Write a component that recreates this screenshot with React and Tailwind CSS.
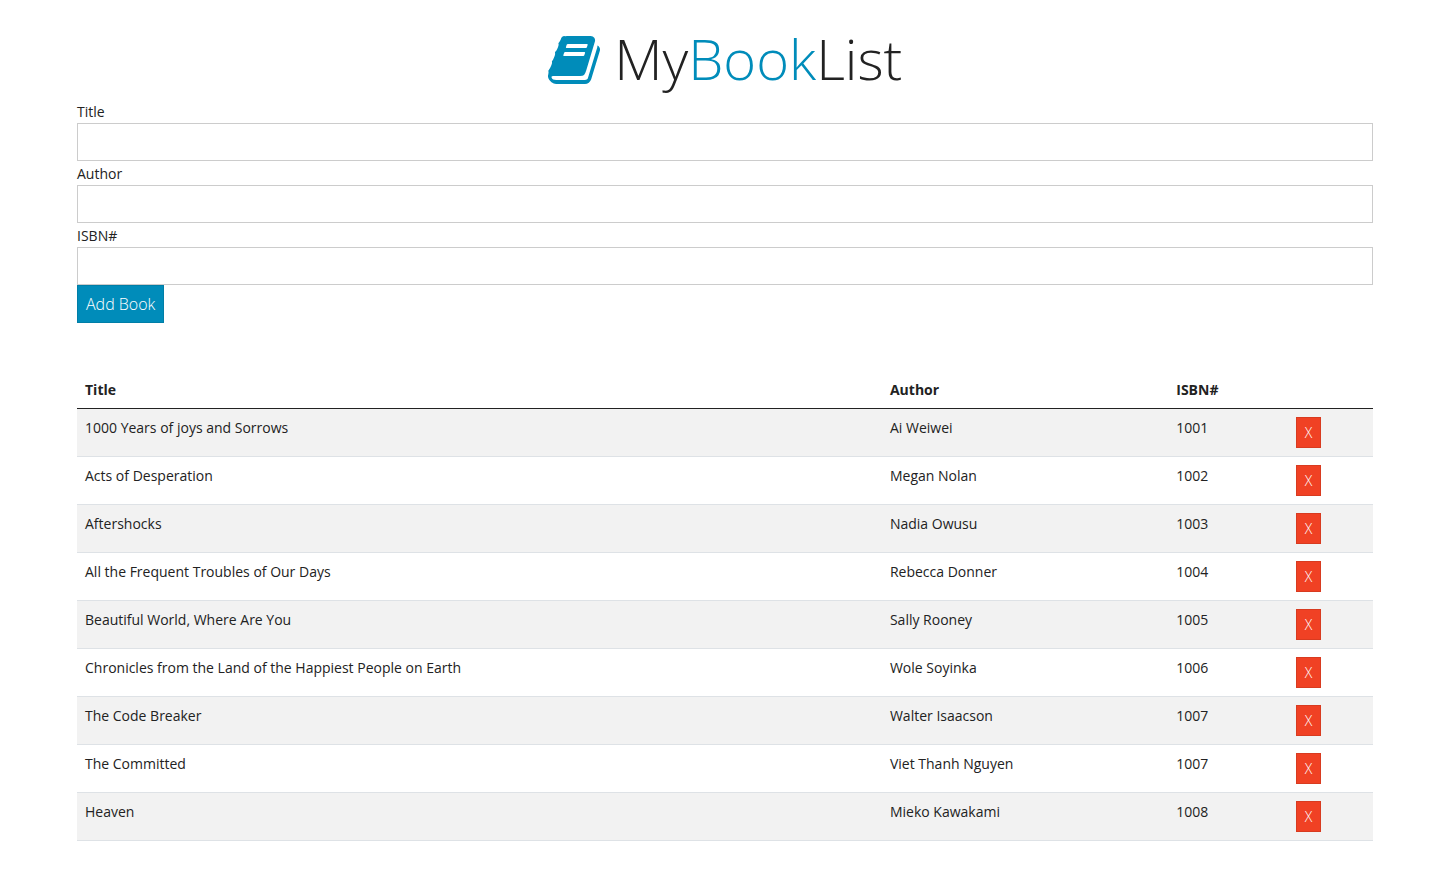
import { useState } from "react";

const initialBooks = [
  { title: "1000 Years of joys and Sorrows", author: "Ai Weiwei", isbn: "1001" },
  { title: "Acts of Desperation", author: "Megan Nolan", isbn: "1002" },
  { title: "Aftershocks", author: "Nadia Owusu", isbn: "1003" },
  { title: "All the Frequent Troubles of Our Days", author: "Rebecca Donner", isbn: "1004" },
  { title: "Beautiful World, Where Are You", author: "Sally Rooney", isbn: "1005" },
  { title: "Chronicles from the Land of the Happiest People on Earth", author: "Wole Soyinka", isbn: "1006" },
  { title: "The Code Breaker", author: "Walter Isaacson", isbn: "1007" },
  { title: "The Committed", author: "Viet Thanh Nguyen", isbn: "1007" },
  { title: "Heaven", author: "Mieko Kawakami", isbn: "1008" },
];

const fields = [
  { name: "title", label: "Title" },
  { name: "author", label: "Author" },
  { name: "isbn", label: "ISBN#" },
];

const emptyBook = { title: "", author: "", isbn: "" };

function BookIcon() {
  return (
    <svg
      className="inline-block h-14 w-[52px] align-[-8px] text-[#008cba]"
      viewBox="0 0 1664 1792"
      fill="currentColor"
      aria-hidden="true"
    >
      <path d="M1639 478q40 57 18 129l-275 906q-19 64-76.5 107.5t-122.5 43.5h-923q-77 0-148.5-53.5t-99.5-131.5q-24-67-2-127 0-4 3-27t4-37q1-8-3-21.5t-3-19.5q2-11 8-21t16.5-23.5 16.5-23.5q23-38 45-91.5t30-91.5q3-10 .5-30t-.5-28q3-11 17-28t17-23q21-36 42-92t25-90q1-9-2.5-32t.5-28q4-13 22-30.5t22-22.5q19-26 42.5-84.5t27.5-96.5q1-8-3-25.5t-2-26.5q2-8 9-18t18-23 17-21q8-12 16.5-30.5t15-35 16-36 19.5-32 26.5-23.5 36-11.5 47.5 5.5l-1 3q38-9 51-9h761q74 0 114 56t18 130l-274 906q-36 119-71.5 153.5t-128.5 34.5h-869q-27 0-38 15-11 16-1 43 24 70 144 70h923q29 0 56-15.5t35-41.5l300-987q7-22 5-57 38 15 59 43zm-1064 2q-4 13 2 22.5t20 9.5h608q13 0 25.5-9.5t16.5-22.5l21-64q4-13-2-22.5t-20-9.5h-608q-13 0-25.5 9.5t-16.5 22.5zm-83 256q-4 13 2 22.5t20 9.5h608q13 0 25.5-9.5t16.5-22.5l21-64q4-13-2-22.5t-20-9.5h-608q-13 0-25.5 9.5t-16.5 22.5z" />
    </svg>
  );
}

function BookForm({ onAdd }) {
  const [draft, setDraft] = useState(emptyBook);

  const submit = (event) => {
    event.preventDefault();
    if (!draft.title || !draft.author || !draft.isbn) return;
    onAdd(draft);
    setDraft(emptyBook);
  };

  return (
    <form onSubmit={submit}>
      {fields.map(({ name, label }) => (
        <div key={name}>
          <label htmlFor={name} className="block pt-0.5 pb-px">
            {label}
          </label>
          <input
            id={name}
            type="text"
            value={draft[name]}
            onChange={(event) => setDraft({ ...draft, [name]: event.target.value })}
            className="block w-full border border-[#ccc] bg-white px-3 py-1.5 text-base outline-none focus:border-[#008cba]"
          />
        </div>
      ))}
      <button
        type="submit"
        className="block cursor-pointer border border-[#007ea7] bg-[#008cba] px-2 py-1.5 text-base font-light text-white hover:bg-[#00779e]"
      >
        Add Book
      </button>
    </form>
  );
}

function BookTable({ books, onRemove }) {
  return (
    <table className="mt-12 w-full">
      <thead>
        <tr className="border-b border-[#222] text-left">
          <th className="p-2 font-bold">Title</th>
          <th className="p-2 font-bold">Author</th>
          <th className="p-2 font-bold">ISBN#</th>
          <td className="p-2"></td>
        </tr>
      </thead>
      <tbody>
        {books.map((book, index) => (
          <tr key={index} className="border-b border-[#dee2e6] align-top odd:bg-[#f2f2f2]">
            <td className="p-2">{book.title}</td>
            <td className="p-2">{book.author}</td>
            <td className="p-2">{book.isbn}</td>
            <td className="p-2">
              <button
                type="button"
                aria-label={`X, remove ${book.title}`}
                onClick={() => onRemove(index)}
                className="block cursor-pointer border border-[#d83b20] bg-[#f04124] px-2 py-1 font-light text-white hover:bg-[#cc371f]"
              >
                X
              </button>
            </td>
          </tr>
        ))}
      </tbody>
    </table>
  );
}

export default function App() {
  const [books, setBooks] = useState(initialBooks);

  return (
    <main className="mx-auto max-w-[1320px] px-3 pt-6 pb-10 font-['Open_Sans',sans-serif] text-sm leading-[21px] text-[#222]">
      <h1 className="mb-1.5 text-center text-[56px] leading-[69px] font-light">
        <BookIcon /> My<span className="text-[#008cba]">Book</span>List
      </h1>
      <BookForm onAdd={(book) => setBooks([...books, book])} />
      <BookTable
        books={books}
        onRemove={(index) => setBooks(books.filter((_, i) => i !== index))}
      />
    </main>
  );
}
